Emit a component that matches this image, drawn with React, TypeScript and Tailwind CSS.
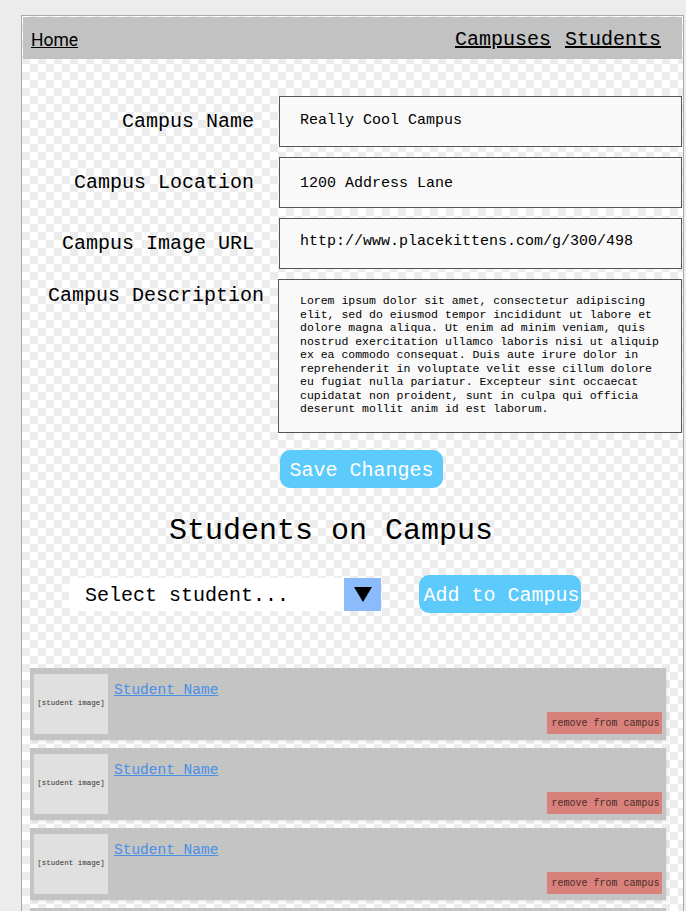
const students = [1, 2, 3];

const StudentRow = () => {
  return (
    <div className="flex h-[72px] bg-[#c4c4c4] pl-[4px] pr-[4px] py-[6px] shadow-[2px_2px_2px_rgba(0,0,0,0.07)]">
      <div className="w-[74px] h-[60px] shrink-0 bg-[#e0e0e0] flex items-center justify-center text-[7.5px] text-[#333]">
        [student image]
      </div>
      <div className="flex-1 flex flex-col justify-between pl-[6px]">
        <a href="#" className="text-[14.5px] leading-[18px] mt-[7px] text-[#4a8fe6] underline self-start">
          Student Name
        </a>
        <div className="self-end h-[22px] w-[115px] bg-[#d9827c] text-[10px] text-[#4b2a28] flex items-center justify-center pt-px pl-[2px]">
          remove from campus
        </div>
      </div>
    </div>
  );
};

export default function App() {
  return (
    <div className="h-[911px] overflow-hidden bg-[#ececec] pt-[15px] font-['Liberation_Mono',monospace] text-black">
      <div className="ml-[21px] w-[663px] border border-[#a9a9a9] p-px pb-10 bg-white bg-[conic-gradient(#ececec_25%,#ffffff_0_50%,#ececec_0_75%,#ffffff_0)] bg-[length:16px_16px]">
        <nav className="h-[42px] bg-[#c2c2c2] flex items-center justify-between pl-[8px] pr-[21px] pt-[4px] text-[20px]">
          <a href="#" className="underline text-[17.5px] font-['Roboto',sans-serif]">
            Home
          </a>
          <div className="flex gap-[14px]">
            <a href="#" className="underline">Campuses</a>
            <a href="#" className="underline">Students</a>
          </div>
        </nav>

        <div className="mt-[37px] grid grid-cols-[206px_403px] gap-x-[25px] gap-y-[10px] ml-[25px] text-[20px]">
          <label className="text-right self-center whitespace-nowrap">Campus Name</label>
          <div className="h-[51px] border border-[#555] bg-[#f9f9f9] flex items-center pl-[20px] text-[15px]">
            Really Cool Campus
          </div>

          <label className="text-right self-center whitespace-nowrap">Campus Location</label>
          <div className="h-[51px] border border-[#555] bg-[#f9f9f9] flex items-center pl-[20px] text-[15px] pt-[4px]">
            1200 Address Lane
          </div>

          <label className="text-right self-center whitespace-nowrap">Campus Image URL</label>
          <div className="h-[51px] border border-[#555] bg-[#f9f9f9] flex items-center pl-[20px] text-[15px] pb-[3px]">
            http://www.placekittens.com/g/300/498
          </div>

          <label className="text-right whitespace-nowrap pt-[2px]">Campus Description</label>
          <div className="h-[154px] -ml-px border border-[#555] bg-[#f9f9f9] pl-[21px] pr-[12px] pt-[14px] text-[11.5px] leading-[13.5px]">
            Lorem ipsum dolor sit amet, consectetur adipiscing elit, sed do eiusmod tempor incididunt ut labore et dolore magna aliqua. Ut enim ad minim veniam, quis nostrud exercitation ullamco laboris nisi ut aliquip ex ea commodo consequat. Duis aute irure dolor in reprehenderit in voluptate velit esse cillum dolore eu fugiat nulla pariatur. Excepteur sint occaecat cupidatat non proident, sunt in culpa qui officia deserunt mollit anim id est laborum.
          </div>

          <div />
          <button className="mt-[7px] self-start justify-self-start ml-px h-[38px] w-[163px] rounded-[10px] bg-[#5ccafb] text-white text-[20px] pt-[4px]">
            Save Changes
          </button>
        </div>

        <h2 className="w-[616px] text-center text-[30px] leading-[36px] mt-[25px]">
          Students on Campus
        </h2>

        <div className="mt-[26px] ml-[46px] flex items-center gap-[38px]">
          <div className="flex h-[33px] w-[312px] bg-white rounded-l-[6px]">
            <div className="flex-1 flex items-center pl-[16px] pt-[4px] text-[20px]">
              Select student...
            </div>
            <div className="w-[37px] bg-[#8bbbfc] flex items-center justify-center">
              <svg width="18" height="16" viewBox="0 0 18 16">
                <polygon points="0,1 18,1 9,16" fill="#000" />
              </svg>
            </div>
          </div>
          <button className="h-[38px] w-[162px] rounded-[10px] bg-[#5ccafb] text-white text-[20px] pl-[3px] pt-[4px]">
            Add to Campus
          </button>
        </div>

        <div className="mt-[55px] ml-[7px] w-[636px] flex flex-col gap-[8px]">
          {students.map((s) => (
            <StudentRow key={s} />
          ))}
          <div className="h-[72px] bg-[#c4c4c4]" />
        </div>
      </div>
    </div>
  );
}
